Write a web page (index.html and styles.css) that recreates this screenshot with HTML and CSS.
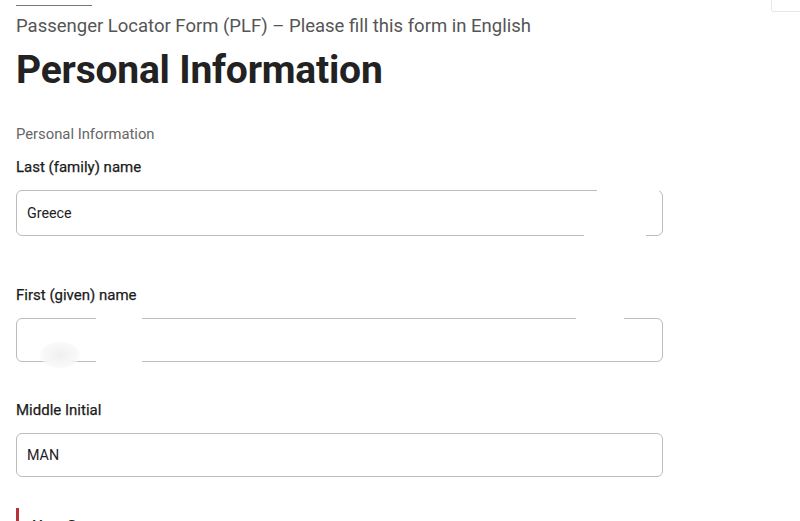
FILE: index.html
```html
<!DOCTYPE html>
<html lang="en">
<head>
<meta charset="utf-8">
<title>Passenger Locator Form</title>
<link rel="stylesheet" href="styles.css">
</head>
<body>
<div class="corner-box"></div>
<main class="page">
  <div class="top-rule"></div>
  <p class="subtitle">Passenger Locator Form (PLF) – Please fill this form in English</p>
  <h1 class="title">Personal Information</h1>
  <p class="section-label">Personal Information</p>

  <div class="field field-first">
    <label class="field-label">Last (family) name</label>
    <div class="input-wrap">
      <div class="input">Greece</div>
      <span class="smudge smudge-a"></span>
      <span class="smudge smudge-b"></span>
    </div>
  </div>

  <div class="field">
    <label class="field-label">First (given) name</label>
    <div class="input-wrap">
      <div class="input input-short"></div>
      <span class="smudge smudge-c"></span>
      <span class="smudge smudge-d"></span>
      <span class="blur-blob"></span>
    </div>
  </div>

  <div class="field field-mid">
    <label class="field-label">Middle Initial</label>
    <div class="input-wrap">
      <div class="input input-short">MAN</div>
    </div>
  </div>

  <div class="required-block">
    <span class="required-text">Your S</span>
  </div>
</main>
</body>
</html>
```

FILE: styles.css
```css
html, body {
  margin: 0;
  padding: 0;
  background: #ffffff;
  overflow: hidden;
}
body {
  font-family: Roboto, "Liberation Sans", sans-serif;
  color: #222;
  width: 800px;
  height: 521px;
  position: relative;
}
.corner-box {
  position: absolute;
  top: -2px;
  right: -4px;
  width: 31px;
  height: 12px;
  border: 1px solid #e6e6e6;
  border-radius: 2px;
}
.page {
  padding: 0 0 0 16px;
  width: 647px;
}
.top-rule {
  width: 76px;
  height: 1px;
  background: #777;
  margin-top: 5px;
}
.subtitle {
  margin: 9px 0 0;
  font-size: 18.5px;
  line-height: 22px;
  color: #555;
}
.title {
  margin: 10px 0 0;
  font-size: 39px;
  line-height: 46px;
  font-weight: 700;
  color: #222;
  letter-spacing: -0.2px;
}
.section-label {
  margin: 32px 0 0;
  font-size: 14.8px;
  line-height: 18px;
  color: #666;
}
.field {
  margin-top: 50px;
}
.field-first {
  margin-top: 15px;
}
.field-mid {
  margin-top: 39px;
}
.field-label {
  display: block;
  font-size: 15px;
  line-height: 18px;
  font-weight: 400;
  color: #1c1c1c;
  -webkit-text-stroke: 0.25px #1c1c1c;
}
.input-wrap {
  position: relative;
  margin-top: 14px;
}
.input {
  box-sizing: border-box;
  height: 46px;
  border: 1px solid #bcbcbc;
  border-radius: 6px;
  padding: 0 10px;
  display: flex;
  align-items: center;
  font-size: 14.3px;
  color: #222;
}
.input-short {
  height: 44px;
}
.smudge {
  position: absolute;
  background: #fff;
}
.smudge-a {
  left: 581px;
  top: -2px;
  width: 62px;
  height: 6px;
}
.smudge-b {
  left: 568px;
  top: 42px;
  width: 62px;
  height: 6px;
}
.smudge-c {
  left: 80px;
  top: -3px;
  width: 46px;
  height: 52px;
  background: #fff;
}
.smudge-d {
  left: 560px;
  top: -2px;
  width: 48px;
  height: 5px;
}
.blur-blob {
  position: absolute;
  left: 24px;
  top: 24px;
  width: 40px;
  height: 26px;
  border-radius: 50%;
  background: radial-gradient(ellipse at center, #f0f0f0 0%, #f7f7f7 50%, rgba(255,255,255,0) 100%);
}
.required-block {
  margin-top: 31px;
  border-left: 3px solid #b5323a;
  padding-left: 14px;
  height: 30px;
}
.required-text {
  display: block;
  padding-top: 9px;
  font-size: 15px;
  font-weight: 400;
  -webkit-text-stroke: 0.25px #222;
  color: #222;
}
```
